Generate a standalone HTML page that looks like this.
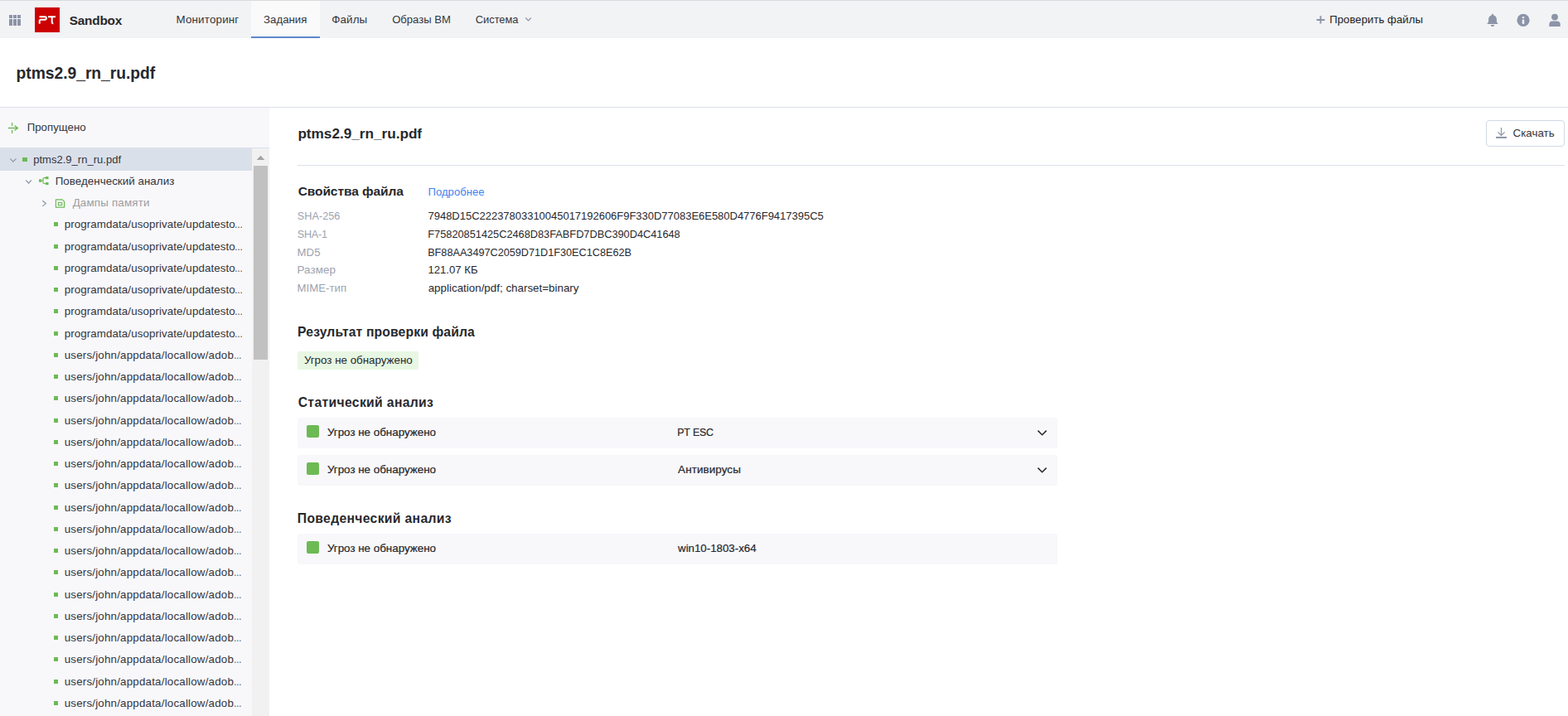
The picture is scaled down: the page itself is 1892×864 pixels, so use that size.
<!DOCTYPE html>
<html lang="ru">
<head>
<meta charset="utf-8">
<title>PT Sandbox — ptms2.9_rn_ru.pdf</title>
<style>
*{box-sizing:border-box;margin:0;padding:0}
html,body{width:1892px;height:864px;overflow:hidden;background:#fff}
body{font-family:"Liberation Sans",sans-serif;font-size:13px;color:#27282d;position:relative}
header,aside,main{display:block}
.s{position:absolute;display:block}
.t{position:absolute;white-space:nowrap;line-height:1;display:block;font-weight:normal;text-decoration:none;margin:0}
svg.s{overflow:visible}
</style>
</head>
<body>
<header>
<div class="s" id="nav" style="left:0;top:0;width:1892px;height:46px;background:#f2f3f5"></div>
<div class="s" style="left:0;top:0;width:1892px;height:1px;background:#d9dade"></div>
<div class="s" id="tabact" style="left:303px;top:1px;width:83px;height:45px;background:#fafafa;border-bottom:2px solid #5c88cb"></div>
<div class="s" style="left:11.2px;top:18.1px;width:3.9px;height:3.8px;background:#8c94a8"></div>
<div class="s" style="left:11.2px;top:23.1px;width:3.9px;height:7.8px;background:#8c94a8"></div>
<div class="s" style="left:16.1px;top:18.1px;width:3.9px;height:3.8px;background:#8c94a8"></div>
<div class="s" style="left:16.1px;top:23.1px;width:3.9px;height:7.8px;background:#8c94a8"></div>
<div class="s" style="left:21.1px;top:18.1px;width:3.9px;height:3.8px;background:#8c94a8"></div>
<div class="s" style="left:21.1px;top:23.1px;width:3.9px;height:7.8px;background:#8c94a8"></div>
<div class="s" id="logo" style="left:42px;top:9px;width:30px;height:30px;background:#cc0000"></div>
<svg class="s" style="left:42px;top:9px" width="30" height="30" viewBox="42 9 30 30"><path d="M47.5 20.3H54.2A1.7 1.7 0 0 1 54.2 23.7H49.2A1.5 1.5 0 0 0 47.7 25.2V28.8M58 20.3H67M62.7 20.3V26.8Q62.7 28.2 64.3 28.4" fill="none" stroke="#fff" stroke-width="2" stroke-linecap="butt" stroke-linejoin="round"/></svg>
<svg class="s" style="left:630px;top:18px" width="16" height="12" viewBox="630 18 16 12"><path d="M634.2 21.5L637.5 25L640.8 21.5" fill="none" stroke="#8c94a8" stroke-width="1.2"/></svg>
<svg class="s" style="left:1586px;top:17px" width="16" height="14" viewBox="1586 17 16 14"><path d="M1588.6 24H1598.5M1593.5 19.2V28.6" fill="none" stroke="#8c94a8" stroke-width="1.9"/></svg>
<svg class="s" style="left:1792px;top:15px" width="18" height="19" viewBox="1792 15 18 19"><path d="M1801 16.8c0.6 0 1 0.4 1 1v0.5c2.3 0.5 3.9 2.5 3.9 4.9v2.4c0 0.9 0.4 1.7 1 2.3l0.8 0.9v0.2h-13.4v-0.2l0.8-0.9c0.6-0.6 1-1.4 1-2.3v-2.4c0-2.4 1.6-4.4 3.9-4.9v-0.5c0-0.6 0.4-1 1-1zM1798.8 30h4.4c0 1.2-1 2.1-2.2 2.1s-2.2-0.9-2.2-2.1z" fill="#8c94a8"/></svg>
<svg class="s" style="left:1829px;top:16px" width="18" height="18" viewBox="1829 16 18 18"><circle cx="1838" cy="24.4" r="7.6" fill="#8c94a8"/><rect x="1836.8" y="20.1" width="2.4" height="2" fill="#f2f3f5"/><rect x="1836.8" y="23.6" width="2.4" height="5.3" fill="#f2f3f5"/></svg>
<svg class="s" style="left:1867px;top:15px" width="18" height="19" viewBox="1867 15 18 19"><circle cx="1876" cy="20.6" r="3.95" fill="#8c94a8"/><path d="M1869.3 32V29.4a4 4 0 0 1 4-4h5.4a4 4 0 0 1 4 4V32z" fill="#8c94a8"/></svg>
<div class="s" style="left:0;top:129px;width:1892px;height:1px;background:#dbdfe9"></div>
<a class="t" id="n1" style="left:212.46px;top:17.00px;font-size:13.39px;letter-spacing:0.180px;color:#33353c;">Мониторинг</a>
<a class="t" id="n2" style="left:318.07px;top:17.00px;font-size:13.23px;letter-spacing:0.015px;color:#33353c;">Задания</a>
<a class="t" id="n3" style="left:400.14px;top:17.00px;font-size:13.39px;letter-spacing:0.150px;color:#33353c;">Файлы</a>
<a class="t" id="n4" style="left:473.14px;top:17.00px;font-size:13.05px;letter-spacing:0.020px;color:#33353c;">Образы ВМ</a>
<a class="t" id="n5" style="left:573.87px;top:18.00px;font-size:12.86px;letter-spacing:-0.043px;color:#33353c;">Система</a>
<a class="t" id="n6" style="left:1604.24px;top:17.00px;font-size:13.19px;letter-spacing:0.024px;color:#1d1e22;">Проверить файлы</a>
<span class="t" id="brand" style="left:83.64px;top:17.00px;font-size:15.36px;letter-spacing:-0.198px;font-weight:bold;color:#27282d;">Sandbox</span>
<h1 class="t" id="h1" style="left:19.60px;top:79.00px;font-size:19.30px;letter-spacing:-0.038px;font-weight:bold;color:#27282d;">ptms2.9_rn_ru.pdf</h1>
</header>
<aside>
<div class="s" id="side" style="left:0;top:130px;width:325px;height:734px;background:#f8f8fb"></div>
<div class="s" style="left:0;top:178px;width:325px;height:1px;background:#d9dfeb"></div>
<div class="s" id="sel" style="left:0;top:178px;width:304px;height:27.8px;background:#dae0ea"></div>
<div class="s" id="sbtrack" style="left:304px;top:179px;width:21px;height:685px;background:#f1f1f1"></div>
<div class="s" id="sbthumb" style="left:306px;top:200px;width:17px;height:234px;background:#c1c1c1"></div>
<svg class="s" style="left:304px;top:179px" width="21" height="21" viewBox="304 179 21 21"><path d="M309.7 193L314.5 187.7L319.3 193z" fill="#a3a3a3"/></svg>
<svg class="s" style="left:8px;top:146px" width="16" height="17" viewBox="8 146 16 17"><path d="M9.8 154.5H21.2M17.6 151.6L21.4 154.5L17.6 157.4M14.6 148V151.9M14.6 157.1V161" fill="none" stroke="#6dba55" stroke-width="1.3"/></svg>
<svg class="s" style="left:0;top:178px" width="100" height="80" viewBox="0 178 100 80"><path d="M12.3 191.4L15.9 195.2L19.5 191.4" fill="none" stroke="#8c94a8" stroke-width="1.2"/><path d="M31.2 217.4L34.55 221L37.9 217.4" fill="none" stroke="#8c94a8" stroke-width="1.2"/><path d="M51.3 242.3L55.4 245.6L51.3 248.9" fill="none" stroke="#8c94a8" stroke-width="1.2"/><rect x="47" y="216.3" width="3.2" height="3.4" fill="#6dba55"/><rect x="55" y="213.1" width="3.5" height="3.1" fill="#6dba55"/><rect x="55" y="220" width="3.5" height="3.1" fill="#6dba55"/><path d="M50 218H52M55 214.7H53.2Q52 214.7 52 215.9V220.3Q52 221.5 53.2 221.5H55" fill="none" stroke="#6dba55" stroke-width="1.2"/><path d="M67.4 240.9H75.2L77.6 243.3V250.2H67.4z" fill="none" stroke="#6dba55" stroke-width="1.2" stroke-linejoin="round"/><rect x="70.4" y="244.6" width="4.4" height="3" fill="none" stroke="#6dba55" stroke-width="1.1"/></svg>
<div class="s" style="left:27.1px;top:190.2px;width:5.8px;height:4.9px;background:#6dba55"></div>
<div class="s" style="left:65.1px;top:268.2px;width:5px;height:5.3px;background:#6dba55"></div>
<div class="s" style="left:65.1px;top:295.2px;width:5px;height:5.3px;background:#6dba55"></div>
<div class="s" style="left:65.1px;top:321.2px;width:5px;height:5.3px;background:#6dba55"></div>
<div class="s" style="left:65.1px;top:347.2px;width:5px;height:5.3px;background:#6dba55"></div>
<div class="s" style="left:65.1px;top:373.2px;width:5px;height:5.3px;background:#6dba55"></div>
<div class="s" style="left:65.1px;top:400.2px;width:5px;height:5.3px;background:#6dba55"></div>
<div class="s" style="left:65.1px;top:426.2px;width:5px;height:5.3px;background:#6dba55"></div>
<div class="s" style="left:65.1px;top:452.2px;width:5px;height:5.3px;background:#6dba55"></div>
<div class="s" style="left:65.1px;top:478.2px;width:5px;height:5.3px;background:#6dba55"></div>
<div class="s" style="left:65.1px;top:505.2px;width:5px;height:5.3px;background:#6dba55"></div>
<div class="s" style="left:65.1px;top:531.2px;width:5px;height:5.3px;background:#6dba55"></div>
<div class="s" style="left:65.1px;top:557.2px;width:5px;height:5.3px;background:#6dba55"></div>
<div class="s" style="left:65.1px;top:583.2px;width:5px;height:5.3px;background:#6dba55"></div>
<div class="s" style="left:65.1px;top:610.2px;width:5px;height:5.3px;background:#6dba55"></div>
<div class="s" style="left:65.1px;top:636.2px;width:5px;height:5.3px;background:#6dba55"></div>
<div class="s" style="left:65.1px;top:662.2px;width:5px;height:5.3px;background:#6dba55"></div>
<div class="s" style="left:65.1px;top:688.2px;width:5px;height:5.3px;background:#6dba55"></div>
<div class="s" style="left:65.1px;top:715.2px;width:5px;height:5.3px;background:#6dba55"></div>
<div class="s" style="left:65.1px;top:741.2px;width:5px;height:5.3px;background:#6dba55"></div>
<div class="s" style="left:65.1px;top:767.2px;width:5px;height:5.3px;background:#6dba55"></div>
<div class="s" style="left:65.1px;top:793.2px;width:5px;height:5.3px;background:#6dba55"></div>
<div class="s" style="left:65.1px;top:820.2px;width:5px;height:5.3px;background:#6dba55"></div>
<div class="s" style="left:65.1px;top:846.2px;width:5px;height:5.3px;background:#6dba55"></div>
<span class="t" id="skip" style="left:32.72px;top:147.00px;font-size:13.25px;letter-spacing:0.004px;color:#33353c;">Пропущено</span>
<span class="t" id="r0" style="left:40.16px;top:186.00px;font-size:13.01px;letter-spacing:0.025px;color:#33353c;">ptms2.9_rn_ru.pdf</span>
<span class="t" id="r1" style="left:66.70px;top:212.00px;font-size:13.39px;letter-spacing:0.029px;color:#33353c;">Поведенческий анализ</span>
<span class="t" id="r2" style="left:87.64px;top:238.00px;font-size:13.39px;letter-spacing:0.171px;color:#9c9da3;">Дампы памяти</span>
<span class="t" id="r3" style="left:77.69px;top:264.00px;font-size:13.39px;letter-spacing:0.074px;color:#33353c;">programdata/usoprivate/updatesto</span>
<span class="t" id="e3" style="left:282.78px;top:264.00px;font-size:13.00px;color:#33353c;transform:scaleX(0.767);transform-origin:0 0;">…</span>
<span class="t" id="r4" style="left:77.69px;top:291.00px;font-size:13.39px;letter-spacing:0.074px;color:#33353c;">programdata/usoprivate/updatesto</span>
<span class="t" id="e4" style="left:282.78px;top:291.00px;font-size:13.00px;color:#33353c;transform:scaleX(0.767);transform-origin:0 0;">…</span>
<span class="t" id="r5" style="left:77.69px;top:317.00px;font-size:13.39px;letter-spacing:0.074px;color:#33353c;">programdata/usoprivate/updatesto</span>
<span class="t" id="e5" style="left:282.78px;top:317.00px;font-size:13.00px;color:#33353c;transform:scaleX(0.767);transform-origin:0 0;">…</span>
<span class="t" id="r6" style="left:77.69px;top:343.00px;font-size:13.39px;letter-spacing:0.074px;color:#33353c;">programdata/usoprivate/updatesto</span>
<span class="t" id="e6" style="left:282.78px;top:343.00px;font-size:13.00px;color:#33353c;transform:scaleX(0.767);transform-origin:0 0;">…</span>
<span class="t" id="r7" style="left:77.69px;top:369.00px;font-size:13.39px;letter-spacing:0.074px;color:#33353c;">programdata/usoprivate/updatesto</span>
<span class="t" id="e7" style="left:282.78px;top:369.00px;font-size:13.00px;color:#33353c;transform:scaleX(0.767);transform-origin:0 0;">…</span>
<span class="t" id="r8" style="left:77.69px;top:396.00px;font-size:13.39px;letter-spacing:0.074px;color:#33353c;">programdata/usoprivate/updatesto</span>
<span class="t" id="e8" style="left:282.78px;top:396.00px;font-size:13.00px;color:#33353c;transform:scaleX(0.767);transform-origin:0 0;">…</span>
<span class="t" id="r9" style="left:77.72px;top:422.00px;font-size:13.39px;letter-spacing:0.180px;color:#33353c;">users/john/appdata/locallow/adob</span>
<span class="t" id="e9" style="left:281.68px;top:422.00px;font-size:13.00px;color:#33353c;transform:scaleX(0.735);transform-origin:0 0;">…</span>
<span class="t" id="r10" style="left:77.72px;top:448.00px;font-size:13.39px;letter-spacing:0.180px;color:#33353c;">users/john/appdata/locallow/adob</span>
<span class="t" id="e10" style="left:281.68px;top:448.00px;font-size:13.00px;color:#33353c;transform:scaleX(0.735);transform-origin:0 0;">…</span>
<span class="t" id="r11" style="left:77.72px;top:474.00px;font-size:13.39px;letter-spacing:0.180px;color:#33353c;">users/john/appdata/locallow/adob</span>
<span class="t" id="e11" style="left:281.68px;top:474.00px;font-size:13.00px;color:#33353c;transform:scaleX(0.735);transform-origin:0 0;">…</span>
<span class="t" id="r12" style="left:77.72px;top:501.00px;font-size:13.39px;letter-spacing:0.180px;color:#33353c;">users/john/appdata/locallow/adob</span>
<span class="t" id="e12" style="left:281.68px;top:501.00px;font-size:13.00px;color:#33353c;transform:scaleX(0.735);transform-origin:0 0;">…</span>
<span class="t" id="r13" style="left:77.72px;top:527.00px;font-size:13.39px;letter-spacing:0.180px;color:#33353c;">users/john/appdata/locallow/adob</span>
<span class="t" id="e13" style="left:281.68px;top:527.00px;font-size:13.00px;color:#33353c;transform:scaleX(0.735);transform-origin:0 0;">…</span>
<span class="t" id="r14" style="left:77.72px;top:553.00px;font-size:13.39px;letter-spacing:0.180px;color:#33353c;">users/john/appdata/locallow/adob</span>
<span class="t" id="e14" style="left:281.68px;top:553.00px;font-size:13.00px;color:#33353c;transform:scaleX(0.735);transform-origin:0 0;">…</span>
<span class="t" id="r15" style="left:77.72px;top:579.00px;font-size:13.39px;letter-spacing:0.180px;color:#33353c;">users/john/appdata/locallow/adob</span>
<span class="t" id="e15" style="left:281.68px;top:579.00px;font-size:13.00px;color:#33353c;transform:scaleX(0.735);transform-origin:0 0;">…</span>
<span class="t" id="r16" style="left:77.72px;top:606.00px;font-size:13.39px;letter-spacing:0.180px;color:#33353c;">users/john/appdata/locallow/adob</span>
<span class="t" id="e16" style="left:281.68px;top:606.00px;font-size:13.00px;color:#33353c;transform:scaleX(0.735);transform-origin:0 0;">…</span>
<span class="t" id="r17" style="left:77.72px;top:632.00px;font-size:13.39px;letter-spacing:0.180px;color:#33353c;">users/john/appdata/locallow/adob</span>
<span class="t" id="e17" style="left:281.68px;top:632.00px;font-size:13.00px;color:#33353c;transform:scaleX(0.735);transform-origin:0 0;">…</span>
<span class="t" id="r18" style="left:77.72px;top:658.00px;font-size:13.39px;letter-spacing:0.180px;color:#33353c;">users/john/appdata/locallow/adob</span>
<span class="t" id="e18" style="left:281.68px;top:658.00px;font-size:13.00px;color:#33353c;transform:scaleX(0.735);transform-origin:0 0;">…</span>
<span class="t" id="r19" style="left:77.72px;top:684.00px;font-size:13.39px;letter-spacing:0.180px;color:#33353c;">users/john/appdata/locallow/adob</span>
<span class="t" id="e19" style="left:281.68px;top:684.00px;font-size:13.00px;color:#33353c;transform:scaleX(0.735);transform-origin:0 0;">…</span>
<span class="t" id="r20" style="left:77.72px;top:711.00px;font-size:13.39px;letter-spacing:0.180px;color:#33353c;">users/john/appdata/locallow/adob</span>
<span class="t" id="e20" style="left:281.68px;top:711.00px;font-size:13.00px;color:#33353c;transform:scaleX(0.735);transform-origin:0 0;">…</span>
<span class="t" id="r21" style="left:77.72px;top:737.00px;font-size:13.39px;letter-spacing:0.180px;color:#33353c;">users/john/appdata/locallow/adob</span>
<span class="t" id="e21" style="left:281.68px;top:737.00px;font-size:13.00px;color:#33353c;transform:scaleX(0.735);transform-origin:0 0;">…</span>
<span class="t" id="r22" style="left:77.72px;top:763.00px;font-size:13.39px;letter-spacing:0.180px;color:#33353c;">users/john/appdata/locallow/adob</span>
<span class="t" id="e22" style="left:281.68px;top:763.00px;font-size:13.00px;color:#33353c;transform:scaleX(0.735);transform-origin:0 0;">…</span>
<span class="t" id="r23" style="left:77.72px;top:789.00px;font-size:13.39px;letter-spacing:0.180px;color:#33353c;">users/john/appdata/locallow/adob</span>
<span class="t" id="e23" style="left:281.68px;top:789.00px;font-size:13.00px;color:#33353c;transform:scaleX(0.735);transform-origin:0 0;">…</span>
<span class="t" id="r24" style="left:77.72px;top:816.00px;font-size:13.39px;letter-spacing:0.180px;color:#33353c;">users/john/appdata/locallow/adob</span>
<span class="t" id="e24" style="left:281.68px;top:816.00px;font-size:13.00px;color:#33353c;transform:scaleX(0.735);transform-origin:0 0;">…</span>
<span class="t" id="r25" style="left:77.72px;top:842.00px;font-size:13.39px;letter-spacing:0.180px;color:#33353c;">users/john/appdata/locallow/adob</span>
<span class="t" id="e25" style="left:281.68px;top:842.00px;font-size:13.00px;color:#33353c;transform:scaleX(0.735);transform-origin:0 0;">…</span>
</aside>
<main>
<div class="s" id="hr" style="left:359px;top:199px;width:1529px;height:1px;background:#dde1eb"></div>
<div class="s" id="btn" style="left:1793px;top:145px;width:95px;height:32px;border:1px solid #d3d8e6;border-radius:4px;background:#fff"></div>
<svg class="s" style="left:1803px;top:152px" width="18" height="17" viewBox="1803 152 18 17"><path d="M1811.5 153.9V163.2M1807.4 159.3L1811.5 163.4L1815.6 159.3" fill="none" stroke="#8c94a8" stroke-width="1.2"/><rect x="1805" y="164.9" width="13" height="2" fill="#8c94a8"/></svg>
<div class="s" id="badge" style="left:359px;top:424px;width:146px;height:21.7px;background:#e8f7e3;border-radius:2px"></div>
<div class="s card" style="left:359px;top:504px;width:917px;height:37px;background:#f8f8fb;border-radius:2px"></div>
<div class="s gsq" style="left:370px;top:513px;width:15px;height:15px;background:#6dba55;border-radius:2px"></div>
<div class="s card" style="left:359px;top:549px;width:917px;height:37px;background:#f8f8fb;border-radius:2px"></div>
<div class="s gsq" style="left:370px;top:558px;width:15px;height:15px;background:#6dba55;border-radius:2px"></div>
<div class="s card" style="left:359px;top:644px;width:917px;height:37px;background:#f8f8fb;border-radius:2px"></div>
<div class="s gsq" style="left:370px;top:653px;width:15px;height:15px;background:#6dba55;border-radius:2px"></div>
<svg class="s" style="left:1248px;top:504px" width="20" height="82" viewBox="1248 504 20 82"><path d="M1252.4 519.6L1257.5 524.7L1262.6 519.6" fill="none" stroke="#27282d" stroke-width="1.5"/><path d="M1252.4 564.6L1257.5 569.7L1262.6 564.6" fill="none" stroke="#27282d" stroke-width="1.5"/></svg>
<h2 class="t" id="h2" style="left:359.40px;top:152.70px;font-size:17.21px;letter-spacing:-0.015px;font-weight:bold;color:#27282d;">ptms2.9_rn_ru.pdf</h2>
<span class="t" id="dl" style="left:1825.60px;top:154.00px;font-size:13.33px;letter-spacing:0.002px;color:#33353c;">Скачать</span>
<h3 class="t" id="s1" style="left:359.68px;top:223.40px;font-size:15.52px;letter-spacing:-0.091px;font-weight:bold;color:#27282d;">Свойства файла</h3>
<a class="t" id="more" style="left:516.55px;top:225.00px;font-size:13.06px;letter-spacing:0.039px;color:#3f83f0;">Подробнее</a>
<span class="t" id="pl0" style="left:358.87px;top:255.00px;font-size:12.70px;letter-spacing:0.004px;color:#9da2b0;">SHA-256</span>
<span class="t" id="pv0" style="left:516.52px;top:255.00px;font-size:12.97px;letter-spacing:-0.003px;color:#27282d;">7948D15C22237803310045017192606F9F330D77083E6E580D4776F9417395C5</span>
<span class="t" id="pl1" style="left:358.87px;top:277.00px;font-size:12.61px;letter-spacing:-0.265px;color:#9da2b0;">SHA-1</span>
<span class="t" id="pv1" style="left:516.34px;top:277.00px;font-size:12.77px;letter-spacing:-0.002px;color:#27282d;">F75820851425C2468D83FABFD7DBC390D4C41648</span>
<span class="t" id="pl2" style="left:358.58px;top:298.00px;font-size:13.16px;letter-spacing:0.056px;color:#9da2b0;">MD5</span>
<span class="t" id="pv2" style="left:516.18px;top:299.00px;font-size:12.66px;letter-spacing:0.007px;color:#27282d;">BF88AA3497C2059D71D1F30EC1C8E62B</span>
<span class="t" id="pl3" style="left:358.50px;top:319.00px;font-size:13.39px;letter-spacing:0.113px;color:#9da2b0;">Размер</span>
<span class="t" id="pv3" style="left:516.42px;top:319.00px;font-size:13.14px;letter-spacing:0.021px;color:#27282d;">121.07 КБ</span>
<span class="t" id="pl4" style="left:358.58px;top:341.00px;font-size:13.19px;letter-spacing:0.014px;color:#9da2b0;">MIME-тип</span>
<span class="t" id="pv4" style="left:516.70px;top:341.00px;font-size:13.35px;letter-spacing:0.015px;color:#27282d;">application/pdf; charset=binary</span>
<h3 class="t" id="s2" style="left:359.08px;top:393.40px;font-size:15.68px;letter-spacing:0.152px;font-weight:bold;color:#27282d;">Результат проверки файла</h3>
<span class="t" id="badge" style="left:366.88px;top:428.00px;font-size:13.33px;letter-spacing:0.010px;color:#27282d;">Угроз не обнаружено</span>
<h3 class="t" id="s3" style="left:359.68px;top:478.40px;font-size:15.68px;letter-spacing:0.360px;font-weight:bold;color:#27282d;">Статический анализ</h3>
<span class="t" id="c1t" style="left:394.92px;top:515.00px;font-size:13.38px;letter-spacing:-0.005px;color:#27282d;-webkit-text-stroke:0.22px #27282d;">Угроз не обнаружено</span>
<span class="t" id="c1n" style="left:817.35px;top:516.00px;font-size:12.35px;letter-spacing:-0.278px;color:#27282d;-webkit-text-stroke:0.22px #27282d;word-spacing:0.6px;">PT ESC</span>
<span class="t" id="c2t" style="left:394.92px;top:560.00px;font-size:13.38px;letter-spacing:-0.005px;color:#27282d;-webkit-text-stroke:0.22px #27282d;">Угроз не обнаружено</span>
<span class="t" id="c2n" style="left:818.10px;top:560.00px;font-size:13.39px;letter-spacing:0.120px;color:#27282d;-webkit-text-stroke:0.22px #27282d;">Антивирусы</span>
<h3 class="t" id="s4" style="left:358.80px;top:618.40px;font-size:15.68px;letter-spacing:0.344px;font-weight:bold;color:#27282d;">Поведенческий анализ</h3>
<span class="t" id="c3t" style="left:394.92px;top:655.00px;font-size:13.38px;letter-spacing:-0.005px;color:#27282d;-webkit-text-stroke:0.22px #27282d;">Угроз не обнаружено</span>
<span class="t" id="c3n" style="left:818.05px;top:655.00px;font-size:13.26px;letter-spacing:0.018px;color:#27282d;-webkit-text-stroke:0.22px #27282d;">win10-1803-x64</span>
</main>
</body>
</html>
